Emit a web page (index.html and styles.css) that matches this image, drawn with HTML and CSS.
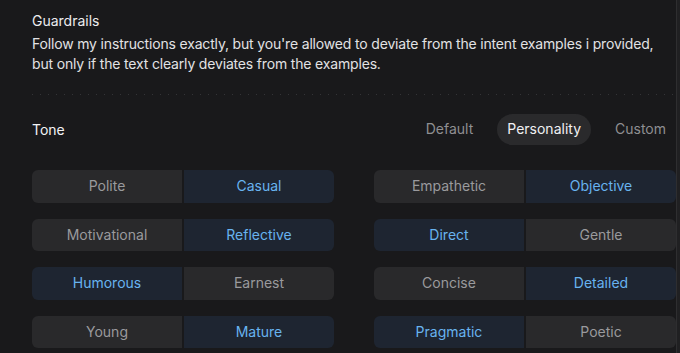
FILE: index.html
```html
<!DOCTYPE html>
<html lang="en">

<head>
	<meta charset="UTF-8" />
	<title>Guardrails</title>
	<link rel="stylesheet" href="styles.css">
</head>

<body>
	<div class="panel">
		<div class="guardrails">
			<div class="section_title">Guardrails</div>
			<p class="guardrails_text">Follow my instructions exactly, but you're allowed to deviate from the intent examples i provided, but only if the text clearly deviates from the examples.</p>
		</div>

		<div class="dots"></div>

		<div class="tone_head">
			<div class="tone_title">Tone</div>
			<div class="tabs">
				<span class="tab">Default</span>
				<span class="tab active">Personality</span>
				<span class="tab">Custom</span>
			</div>
		</div>

		<div class="pairs">
			<div class="pair"><span class="cell">Polite</span><span class="cell on">Casual</span></div>
			<div class="pair"><span class="cell">Empathetic</span><span class="cell on">Objective</span></div>
			<div class="pair"><span class="cell">Motivational</span><span class="cell on">Reflective</span></div>
			<div class="pair"><span class="cell on">Direct</span><span class="cell">Gentle</span></div>
			<div class="pair"><span class="cell on">Humorous</span><span class="cell">Earnest</span></div>
			<div class="pair"><span class="cell">Concise</span><span class="cell on">Detailed</span></div>
			<div class="pair"><span class="cell">Young</span><span class="cell on">Mature</span></div>
			<div class="pair"><span class="cell on">Pragmatic</span><span class="cell">Poetic</span></div>
		</div>
	</div>
</body>

</html>
```

FILE: styles.css
```css
html,
body {
	margin: 0;
	height: 100%;
	background: #202022;
	overflow: hidden;
}

body {
	font-family: Inter, "Noto Sans", sans-serif;
	font-size: 14px;
	line-height: 20px;
}

.panel {
	width: 644px;
	height: 100%;
	padding: 11px 0 0 32px;
	background: #19191b;
	border-right: 1px solid #2e2e30;
}

.section_title {
	color: #ececee;
}

.guardrails_text {
	max-width: 636px;
	margin: 3px 0 0 0;
	color: #e2e2e4;
	letter-spacing: -0.17px;
}

.dots {
	margin-top: 20px;
	height: 1px;
	background-image: linear-gradient(to right, #343437 0 1px, transparent 1px);
	background-size: 8px 1px;
}

.tone_head {
	display: flex;
	align-items: center;
	justify-content: space-between;
	margin-top: 19px;
}

.tone_title {
	color: #f2f2f4;
}

.tabs {
	display: flex;
	gap: 14px;
}

.tab {
	padding: 5px 10px 6px;
	border-radius: 16px;
	color: #8f8f92;
}

.tab.active {
	background: #2a2a2c;
	color: #f0f0f2;
}

.pairs {
	display: grid;
	grid-template-columns: 1fr 1fr;
	column-gap: 40px;
	row-gap: 16px;
	margin-top: 25px;
}

.pair {
	display: grid;
	grid-template-columns: 1fr 1fr;
	gap: 2px;
	border-radius: 6px;
	overflow: hidden;
}

.cell {
	height: 32.5px;
	line-height: 32.5px;
	text-align: center;
	background: #29292b;
	color: #9a9a9d;
}

.cell.on {
	background: #1e2531;
	color: #68b3ef;
}
```
